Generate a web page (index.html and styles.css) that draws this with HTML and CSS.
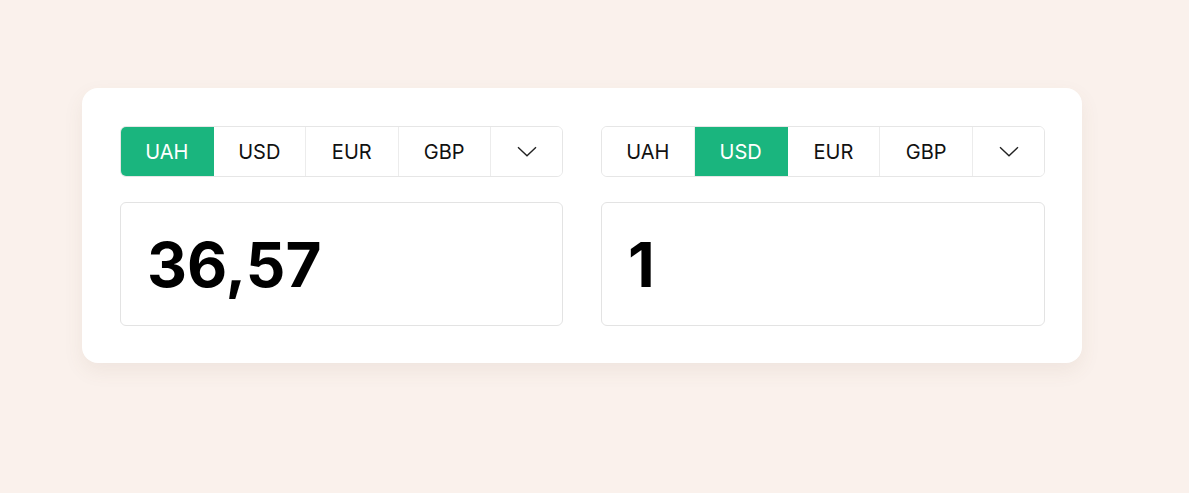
FILE: index.html
```html
<!DOCTYPE html>
<html lang="en">
<head>
<meta charset="utf-8">
<title>Converter</title>
<link rel="stylesheet" href="styles.css">
</head>
<body>
<main class="page">
  <section class="card">
    <div class="col">
      <div class="tabs">
        <button class="tab active">UAH</button>
        <button class="tab">USD</button>
        <button class="tab">EUR</button>
        <button class="tab">GBP</button>
        <button class="tab more"><svg width="20" height="11" viewBox="0 0 20 11"><path d="M1 1.2 L10 9.8 L19 1.2" fill="none" stroke="#222" stroke-width="1.4"/></svg></button>
      </div>
      <div class="field">36,57</div>
    </div>
    <div class="col">
      <div class="tabs">
        <button class="tab">UAH</button>
        <button class="tab active">USD</button>
        <button class="tab">EUR</button>
        <button class="tab">GBP</button>
        <button class="tab more"><svg width="20" height="11" viewBox="0 0 20 11"><path d="M1 1.2 L10 9.8 L19 1.2" fill="none" stroke="#222" stroke-width="1.4"/></svg></button>
      </div>
      <div class="field">1</div>
    </div>
  </section>
</main>
</body>
</html>
```
FILE: styles.css
```css
* { box-sizing: border-box; }
html, body { margin: 0; padding: 0; }
body {
  background: #faf1ec;
  font-family: Inter, "Noto Sans", sans-serif;
  height: 493px;
}
.page {
  padding: 88px 0 0 82px;
}
.card {
  width: 1000px;
  height: 275px;
  background: #fff;
  border-radius: 16px;
  box-shadow: 0 8px 20px rgba(120, 90, 70, 0.08);
  padding: 38px 37px 0 38px;
  display: grid;
  grid-template-columns: 443px 444px;
  column-gap: 38px;
}
.col {
  display: flex;
  flex-direction: column;
  gap: 25px;
}
.tabs {
  display: flex;
  height: 51px;
  border: 1px solid #e6e6e6;
  border-radius: 6px;
  overflow: hidden;
}
.tab {
  flex: 1 1 0;
  border: 0;
  border-right: 1px solid #ececec;
  background: #fff;
  font-family: inherit;
  font-size: 20px;
  font-weight: 400;
  color: #111;
  padding: 0;
  display: flex;
  align-items: center;
  justify-content: center;
}
.tab.active {
  background: #1ab57e;
  color: #fff;
  border-right-color: #1ab57e;
}
.tab.more {
  flex: 0 0 71px;
  border-right: 0;
}
.field {
  height: 124px;
  border: 1px solid #e3e3e3;
  border-radius: 6px;
  padding: 0 26px;
  display: flex;
  align-items: center;
  font-family: Inter, "Liberation Sans", sans-serif;
  font-weight: 700;
  font-size: 62px;
  color: #000;
  letter-spacing: 0;
}
```
